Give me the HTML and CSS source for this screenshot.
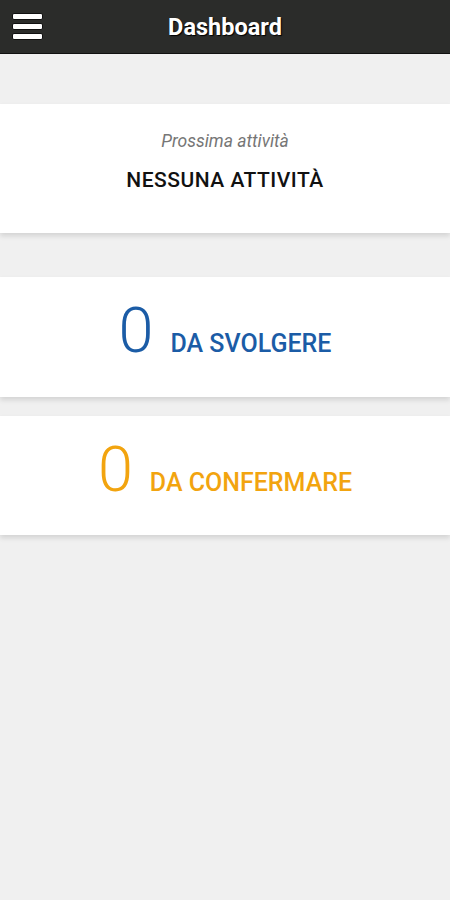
FILE: index.html
```html
<!DOCTYPE html>
<html>
  <head>
    <title>Dashboard</title>
    <meta charset="utf-8" />
    <meta name="viewport" content="width=device-width" />
    <link rel="stylesheet" href="styles.css">
  </head>
  <body>
    <div class="top_bar">
      <div class="menu_button">
        <span></span>
        <span></span>
        <span></span>
      </div>
      <div class="top_title">Dashboard</div>
    </div>

    <div class="content">
      <div class="card" id="next_card">
        <div class="next_label">Prossima attività</div>
        <div class="next_value">NESSUNA ATTIVITÀ</div>
      </div>

      <div class="card counter_card" id="todo_card">
        <span class="counter_number">0</span>
        <span class="counter_label">DA SVOLGERE</span>
      </div>

      <div class="card counter_card" id="confirm_card">
        <span class="counter_number">0</span>
        <span class="counter_label">DA CONFERMARE</span>
      </div>
    </div>
  </body>
</html>
```

FILE: styles.css
```css
* {
  margin: 0;
  padding: 0;
  box-sizing: border-box;
}

body {
  background-color: #f0f0f0;
  color: black;
  font-family: Roboto, "Liberation Sans", Arial, sans-serif;
  width: 450px;
  height: 900px;
  overflow: hidden;
}

.top_bar {
  height: 54px;
  background-color: #2b2c2a;
  border-bottom: 1px solid #111111;
  display: flex;
  align-items: center;
  justify-content: center;
  position: relative;
}

.menu_button {
  position: absolute;
  left: 12px;
  top: 13px;
  width: 31px;
  display: flex;
  flex-direction: column;
  gap: 3px;
}

.menu_button span {
  display: block;
  height: 7px;
  background-color: white;
  border: 1px solid #111111;
  border-radius: 2px;
}

.top_title {
  color: white;
  font-size: 23.5px;
  font-weight: bold;
  text-shadow: 1px 1px 1px black;
  margin-top: 1px;
}

.content {
  padding-top: 50px;
}

.card {
  background-color: white;
  box-shadow: 0 3px 5px rgba(0, 0, 0, 0.12);
}

#next_card {
  height: 129px;
  padding-top: 26px;
  text-align: center;
}

.next_label {
  font-style: italic;
  font-size: 17.5px;
  line-height: 22px;
  color: #767676;
}

.next_value {
  margin-top: 16px;
  font-size: 21px;
  line-height: 24px;
  font-weight: 500;
  letter-spacing: 0.5px;
  color: #111111;
}

.counter_card {
  height: 120px;
  padding-top: 22px;
  display: flex;
  justify-content: center;
  align-items: baseline;
  gap: 17px;
}

#todo_card {
  margin-top: 44px;
  color: #1b5ca6;
}

#confirm_card {
  margin-top: 19px;
  height: 119px;
  color: #f2a40f;
}

.counter_number {
  font-size: 63px;
  line-height: 1;
  font-weight: 300;
}

.counter_label {
  font-size: 25px;
  font-weight: 500;
}
```
